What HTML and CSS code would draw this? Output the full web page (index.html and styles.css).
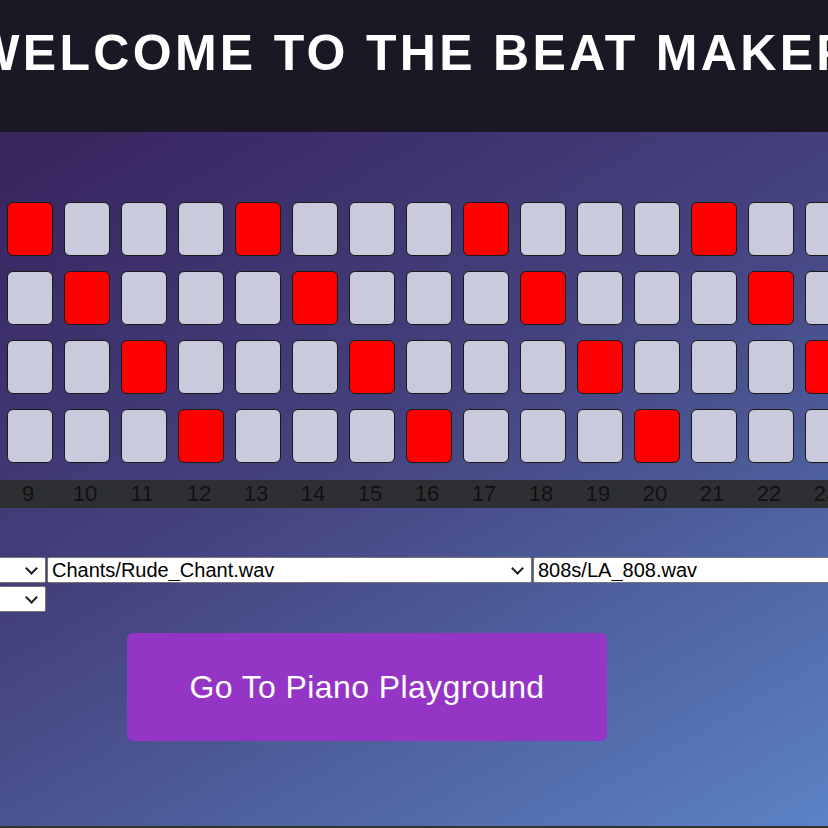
FILE: index.html
```html
<!DOCTYPE html>
<html lang="en">
<head>
<meta charset="utf-8">
<title>Beat Maker</title>
<link rel="stylesheet" href="styles.css">
</head>
<body>
<header class="top">
  <h1 class="title">Welcome to the Beat Maker</h1>
</header>
<main class="stage">
  <div class="grid">
    <div class="row">
      <div class="cell on"></div><div class="cell"></div><div class="cell"></div><div class="cell"></div>
      <div class="cell on"></div><div class="cell"></div><div class="cell"></div><div class="cell"></div>
      <div class="cell on"></div><div class="cell"></div><div class="cell"></div><div class="cell"></div>
      <div class="cell on"></div><div class="cell"></div><div class="cell"></div><div class="cell"></div>
    </div>
    <div class="row">
      <div class="cell"></div><div class="cell on"></div><div class="cell"></div><div class="cell"></div>
      <div class="cell"></div><div class="cell on"></div><div class="cell"></div><div class="cell"></div>
      <div class="cell"></div><div class="cell on"></div><div class="cell"></div><div class="cell"></div>
      <div class="cell"></div><div class="cell on"></div><div class="cell"></div><div class="cell"></div>
    </div>
    <div class="row">
      <div class="cell"></div><div class="cell"></div><div class="cell on"></div><div class="cell"></div>
      <div class="cell"></div><div class="cell"></div><div class="cell on"></div><div class="cell"></div>
      <div class="cell"></div><div class="cell"></div><div class="cell on"></div><div class="cell"></div>
      <div class="cell"></div><div class="cell"></div><div class="cell on"></div><div class="cell"></div>
    </div>
    <div class="row">
      <div class="cell"></div><div class="cell"></div><div class="cell"></div><div class="cell on"></div>
      <div class="cell"></div><div class="cell"></div><div class="cell"></div><div class="cell on"></div>
      <div class="cell"></div><div class="cell"></div><div class="cell"></div><div class="cell on"></div>
      <div class="cell"></div><div class="cell"></div><div class="cell"></div><div class="cell on"></div>
    </div>
  </div>
  <div class="steps">
    <span class="step">9</span><span class="step">10</span><span class="step">11</span><span class="step">12</span>
    <span class="step">13</span><span class="step">14</span><span class="step">15</span><span class="step">16</span>
    <span class="step">17</span><span class="step">18</span><span class="step">19</span><span class="step">20</span>
    <span class="step">21</span><span class="step">22</span><span class="step">23</span><span class="step">24</span>
  </div>
  <div class="pickers">
    <div class="pick-row">
      <span class="pick-wrap pick-edge"><select class="pick"><option></option></select></span>
      <span class="pick-wrap pick-mid"><select class="pick"><option>Chants/Rude_Chant.wav</option></select></span>
      <span class="pick-wrap pick-wide"><select class="pick"><option>808s/LA_808.wav</option></select></span>
    </div>
    <div class="pick-row">
      <span class="pick-wrap pick-edge"><select class="pick"><option></option></select></span>
    </div>
  </div>
  <button class="piano-btn" type="button">Go To Piano Playground</button>
</main>
<footer class="bottom"></footer>
</body>
</html>
```

FILE: styles.css
```css
* {
  box-sizing: border-box;
}

html, body {
  margin: 0;
  padding: 0;
  overflow: hidden;
}

body {
  width: 828px;
  font-family: "Liberation Sans", Arial, sans-serif;
  background: #333333;
}

.top {
  height: 132px;
  background: #1c1724;
  display: flex;
  justify-content: center;
  padding-top: 25px;
}

.title {
  flex: none;
  margin: 0;
  white-space: nowrap;
  color: #ffffff;
  font-size: 50px;
  line-height: 57px;
  font-weight: 700;
  letter-spacing: 3.3px;
  text-transform: uppercase;
}

.stage {
  height: 694px;
  background: linear-gradient(150deg, #38235e 0%, #44437f 45%, #5b82c3 100%);
  padding-top: 70px;
  display: flex;
  flex-direction: column;
}

.grid {
  display: flex;
  flex-direction: column;
  gap: 15px;
  padding-left: 7px;
}

.row {
  display: flex;
  gap: 11px;
}

.cell {
  flex: none;
  width: 46px;
  height: 54px;
  background: #c9cadb;
  border: 1px solid #1a1a1a;
  border-radius: 6px;
}

.cell.on {
  background: #ff0000;
}

.steps {
  margin-top: 17px;
  height: 28px;
  background: #2e2f33;
  display: flex;
  gap: 11px;
  padding-left: 5px;
}

.step {
  flex: none;
  width: 46px;
  text-align: center;
  font-size: 22px;
  line-height: 28px;
  color: #111111;
}

.pickers {
  margin-top: 49px;
  display: flex;
  flex-direction: column;
  gap: 3px;
  margin-left: -20px;
}

.pick-row {
  display: flex;
  gap: 1px;
}

.pick-wrap {
  position: relative;
  flex: none;
  display: block;
  height: 26px;
}

.pick-wrap::after {
  content: "";
  position: absolute;
  right: 10px;
  top: 7px;
  width: 7px;
  height: 7px;
  border-right: 2px solid #1a1a1a;
  border-bottom: 2px solid #1a1a1a;
  transform: rotate(45deg);
  pointer-events: none;
}

.pick {
  appearance: none;
  -webkit-appearance: none;
  display: block;
  width: 100%;
  height: 26px;
  font-family: "Liberation Sans", Arial, sans-serif;
  font-size: 20px;
  color: #000000;
  background: #ffffff;
  border: 1px solid #767676;
  border-radius: 2px;
  padding: 0 4px;
}

.pick-edge {
  width: 66px;
}

.pick-mid {
  width: 485px;
}

.pick-wide {
  width: 420px;
}

.piano-btn {
  margin-top: 21px;
  margin-left: 127px;
  width: 480px;
  height: 108px;
  background: #9535c5;
  color: #ffffff;
  border: none;
  border-radius: 6px;
  font-family: "Liberation Sans", Arial, sans-serif;
  font-size: 32px;
  letter-spacing: 0.4px;
  cursor: pointer;
}

.bottom {
  height: 2px;
  background: #333333;
}
```
